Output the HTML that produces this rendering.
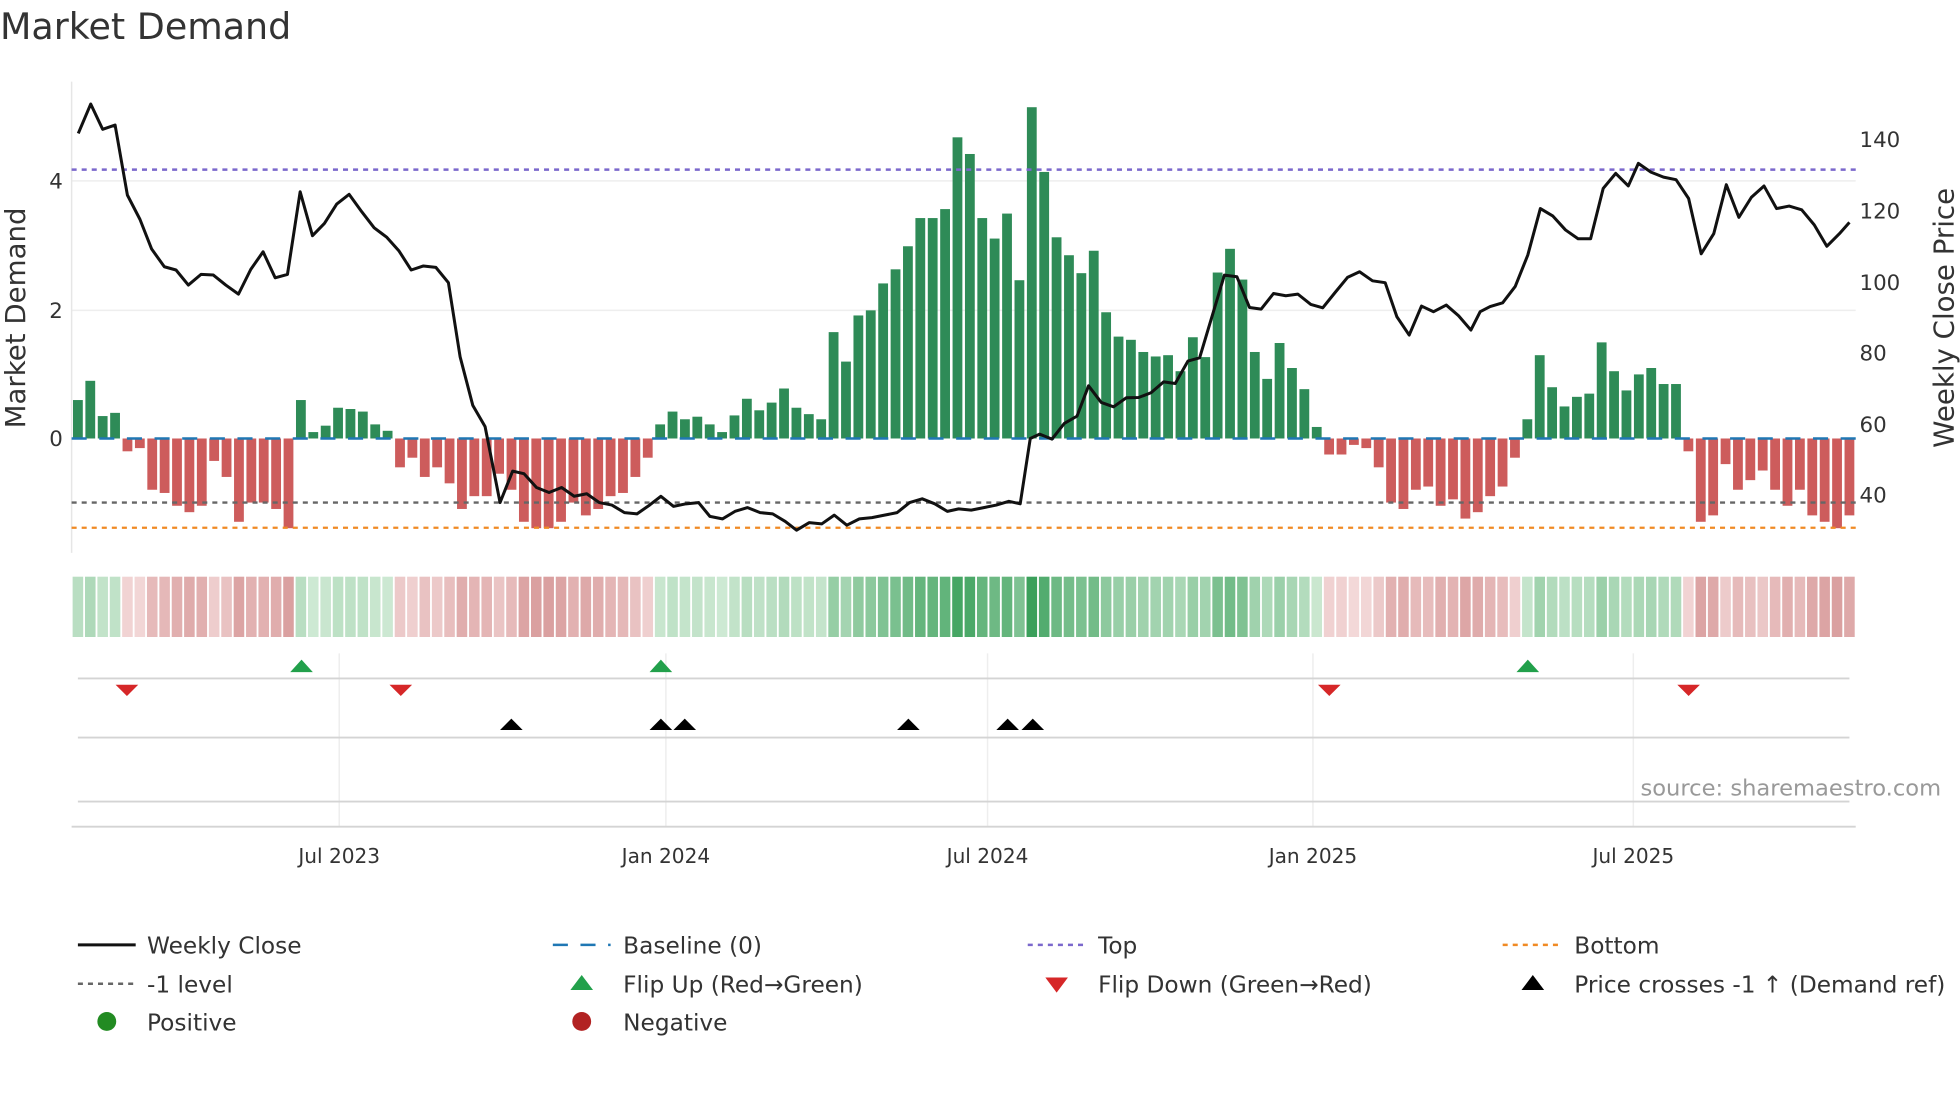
<!DOCTYPE html>
<html><head><meta charset="utf-8"><style>
html,body{margin:0;padding:0;background:#fff;}
svg{display:block;}
text{font-family:"DejaVu Sans","Liberation Sans",sans-serif;}
</style></head><body>
<svg id="s" width="1960" height="1102" viewBox="0 0 1560 877.1" xmlns="http://www.w3.org/2000/svg">
<rect width="1560" height="877.1" fill="#fff"/>
<text x="0" y="31" font-size="29" fill="#333">Market Demand</text>
<line x1="57" y1="144" x2="1477" y2="144" stroke="#eeeeee" stroke-width="1.2"/>
<line x1="57" y1="247" x2="1477" y2="247" stroke="#eeeeee" stroke-width="1.2"/>
<line x1="57" y1="65" x2="57" y2="440" stroke="#e6e6e6" stroke-width="1.2"/>
<g font-size="17" fill="#333" text-anchor="end">
<text x="50" y="150">4</text><text x="50" y="253">2</text><text x="50" y="355">0</text>
</g>
<g font-size="17" fill="#333">
<text x="1480" y="117">140</text><text x="1480" y="174">120</text><text x="1480" y="231">100</text>
<text x="1480" y="287">80</text><text x="1480" y="344">60</text><text x="1480" y="400">40</text>
</g>
<text transform="translate(20,253) rotate(-90)" font-size="22" fill="#333" text-anchor="middle">Market Demand</text>
<text transform="translate(1555,253) rotate(-90)" font-size="22" fill="#333" text-anchor="middle">Weekly Close Price</text>
<g id="bars"></g>
<line x1="57" y1="135" x2="1477" y2="135" stroke="#7b68cc" stroke-width="2" stroke-dasharray="4,4"/>
<line x1="57" y1="400" x2="1477" y2="400" stroke="#666" stroke-width="1.8" stroke-dasharray="4,4"/>
<line x1="57" y1="420" x2="1477" y2="420" stroke="#f08a24" stroke-width="1.8" stroke-dasharray="4,4"/>
<line x1="57" y1="349" x2="1477" y2="349" stroke="#1f77b4" stroke-width="2" stroke-dasharray="12,10"/>
<polyline fill="none" stroke="#111" stroke-width="2.4" stroke-linejoin="round" points="62.3,106.2 72.2,82.8 81.7,102.9 91.6,99.5 101.4,155.3 111.4,174.6 120.7,198.2 130.8,212.3 140.1,214.9 149.9,226.9 160,218.4 169.8,218.9 179.7,226.9 189.8,234.1 199.6,214.4 209.4,200.4 219,221.1 228.8,218.4 238.9,152.6 248.7,187.6 258.2,177.8 268,162.4 277.9,154.7 287.9,168.5 297.8,181.3 307.9,188.9 317.6,199.8 327.3,214.9 337,211.7 346.9,212.8 356.9,225 366.2,283.9 376.3,322.6 386.1,339.6 398,400 408,375 417,377 427,388 437,392 447,388 457,395 467,393 477,400 487,402 497,408 507,409 517,402 526,395 536,403 546,401 556,400 565,411 575,413 585,407 595,404 605,408 615,409 625,415 634,422 644,416 654,417 664,410 674,418 684,413 694,412 704,410 714,408 724,400 734,397 744,401 754,407 763,405 773,406 783,404 793,402 803,399 812,401 820,349 827.5,345.5 837.3,349.5 847.1,337 857.2,331.2 866.4,307.1 876.5,320.3 886.3,323.8 896.5,316.6 906.2,316.4 916.1,312.6 926.2,303.9 935.4,305.2 945.5,287.4 954.8,284.8 964.6,252.1 974.5,219 984.5,220.3 994.5,244.7 1003.8,246 1013.6,233.6 1023.4,235.4 1033,234.1 1043.3,242.3 1052.8,245 1062.7,232.7 1072.5,220.8 1082.1,216.3 1092.4,223.5 1102.5,225 1111.8,252.1 1121.6,266.7 1131.4,243.6 1141,248.1 1151.1,242.8 1160.9,251.3 1170.7,262.7 1178.1,248.1 1186,244 1196,241 1206,228 1216,203 1226,166 1236,172 1246,183 1256,190 1266,190 1276,150 1286,138 1296,148 1304,130 1314,137 1324,141 1334,143 1344,158 1354,202 1364,186 1374,147 1384,173 1394,157 1404,148 1414,166 1424,164 1434,167 1444,179 1454,196 1464,186 1472,177"/>
<g id="strip"></g>
<g stroke="#eeeeee" stroke-width="1.2">
<line x1="270" y1="520" x2="270" y2="658"/><line x1="530" y1="520" x2="530" y2="658"/>
<line x1="786" y1="520" x2="786" y2="658"/><line x1="1045" y1="520" x2="1045" y2="658"/>
<line x1="1300" y1="520" x2="1300" y2="658"/>
</g>
<g stroke="#d4d4d4" stroke-width="1.5">
<line x1="62" y1="540" x2="1472" y2="540"/>
<line x1="62" y1="587" x2="1472" y2="587"/>
<line x1="62" y1="638" x2="1472" y2="638"/>
<line x1="57" y1="658" x2="1477" y2="658"/>
</g>
<g fill="#22a04b">
<polygon points="231,535 249,535 240,525"/><polygon points="517,535 535,535 526,525"/><polygon points="1207,535 1225,535 1216,525"/>
</g>
<g fill="#d62728">
<polygon points="92,545 110,545 101,554"/><polygon points="310,545 328,545 319,554"/>
<polygon points="1049,545 1067,545 1058,554"/><polygon points="1335,545 1353,545 1344,554"/>
</g>
<g fill="#000">
<polygon points="398,581 416,581 407,572"/><polygon points="517,581 535,581 526,572"/>
<polygon points="536,581 554,581 545,572"/><polygon points="714,581 732,581 723,572"/>
<polygon points="793,581 811,581 802,572"/><polygon points="813,581 831,581 822,572"/>
</g>
<text x="1545" y="633" font-size="18" fill="#999" text-anchor="end">source: sharemaestro.com</text>
<g font-size="16" fill="#333" text-anchor="middle">
<text x="270" y="687">Jul 2023</text><text x="530" y="687">Jan 2024</text><text x="786" y="687">Jul 2024</text>
<text x="1045" y="687">Jan 2025</text><text x="1300" y="687">Jul 2025</text>
</g>
<g font-size="18.5" fill="#333">
<line x1="62" y1="752" x2="108" y2="752" stroke="#111" stroke-width="2.4"/>
<text x="117" y="759">Weekly Close</text>
<line x1="62" y1="783" x2="108" y2="783" stroke="#666" stroke-width="2" stroke-dasharray="4,4"/>
<text x="117" y="790">-1 level</text>
<circle cx="85" cy="813" r="7.5" fill="#228b22"/>
<text x="117" y="820">Positive</text>
<line x1="440" y1="752" x2="486" y2="752" stroke="#1f77b4" stroke-width="2" stroke-dasharray="12,10"/>
<text x="496" y="759">Baseline (0)</text>
<polygon points="454,788 472,788 463,776" fill="#22a04b"/>
<text x="496" y="790">Flip Up (Red→Green)</text>
<circle cx="463" cy="813" r="7.5" fill="#b22222"/>
<text x="496" y="820">Negative</text>
<line x1="818" y1="752" x2="864" y2="752" stroke="#7b68cc" stroke-width="2" stroke-dasharray="4,4"/>
<text x="874" y="759">Top</text>
<polygon points="832,778 850,778 841,790" fill="#d62728"/>
<text x="874" y="790">Flip Down (Green→Red)</text>
<line x1="1196" y1="752" x2="1242" y2="752" stroke="#f08a24" stroke-width="2" stroke-dasharray="4,4"/>
<text x="1253" y="759">Bottom</text>
<polygon points="1211,788 1229,788 1220,776" fill="#000"/>
<text x="1253" y="790">Price crosses -1 ↑ (Demand ref)</text>
</g>
</svg>
<script>
var v=[0.6,0.9,0.35,0.4,-0.2,-0.15,-0.8,-0.85,-1.05,-1.15,-1.05,-0.35,-0.6,-1.3,-1.0,-1.0,-1.1,-1.4,
0.6,0.1,0.2,0.48,0.46,0.42,0.22,0.12,
-0.45,-0.3,-0.6,-0.45,-0.7,-1.1,-0.9,-0.9,-0.55,-0.8,-1.3,-1.4,-1.4,-1.3,-1.0,-1.2,-1.1,-0.9,-0.85,-0.6,-0.3,
0.22,0.42,0.30,0.34,0.22,0.10,0.36,0.62,0.44,0.56,0.78,0.48,0.38,0.30,1.66,1.20,1.92,2.0,2.42,2.64,3.0,3.44,3.44,3.58,4.7,4.44,3.44,3.12,
3.51,2.47,5.17,4.16,3.14,2.86,2.58,2.93,1.97,1.59,1.54,1.35,1.28,1.30,1.05,1.58,1.27,2.59,2.96,2.48,1.35,0.93,1.49,1.10,0.77,0.18,
-0.25,-0.25,-0.1,-0.15,-0.45,-1.0,-1.1,-0.8,-0.75,-1.05,-0.95,-1.25,-1.15,-0.9,-0.75,-0.3,
0.3,1.3,0.8,0.5,0.65,0.7,1.5,1.05,0.75,1.0,1.1,0.85,0.85,
-0.2,-1.3,-1.2,-0.4,-0.8,-0.65,-0.5,-0.8,-1.05,-0.8,-1.2,-1.3,-1.4,-1.2];
var ns="http://www.w3.org/2000/svg",b=document.getElementById("bars"),st=document.getElementById("strip");
var step=(1472-62)/(v.length-1);
function mix(a,c,t){return "rgb("+[0,1,2].map(function(k){return Math.round(a[k]+(c[k]-a[k])*t)}).join(",")+")";}
for(var i=0;i<v.length;i++){
 var x=62+i*step,val=v[i],h=Math.abs(val)*51,r=document.createElementNS(ns,"rect");
 r.setAttribute("x",x-3.9);r.setAttribute("width",7.8);
 r.setAttribute("y",val>0?349-h:349);r.setAttribute("height",h);
 r.setAttribute("fill",val>0?"#2e8b57":"#cd5c5c");b.appendChild(r);
 var s=document.createElementNS(ns,"rect");
 s.setAttribute("x",x-4.2);s.setAttribute("width",8.4);s.setAttribute("y",459);s.setAttribute("height",48);
 var t=Math.min(Math.abs(val)/5.2,1);
 s.setAttribute("fill",val>0?mix([212,236,216],[58,160,90],Math.pow(t,0.8)):mix([245,220,220],[218,160,160],Math.min(Math.abs(val)/1.4,1)));
 st.appendChild(s);
}
</script>
</body></html>
